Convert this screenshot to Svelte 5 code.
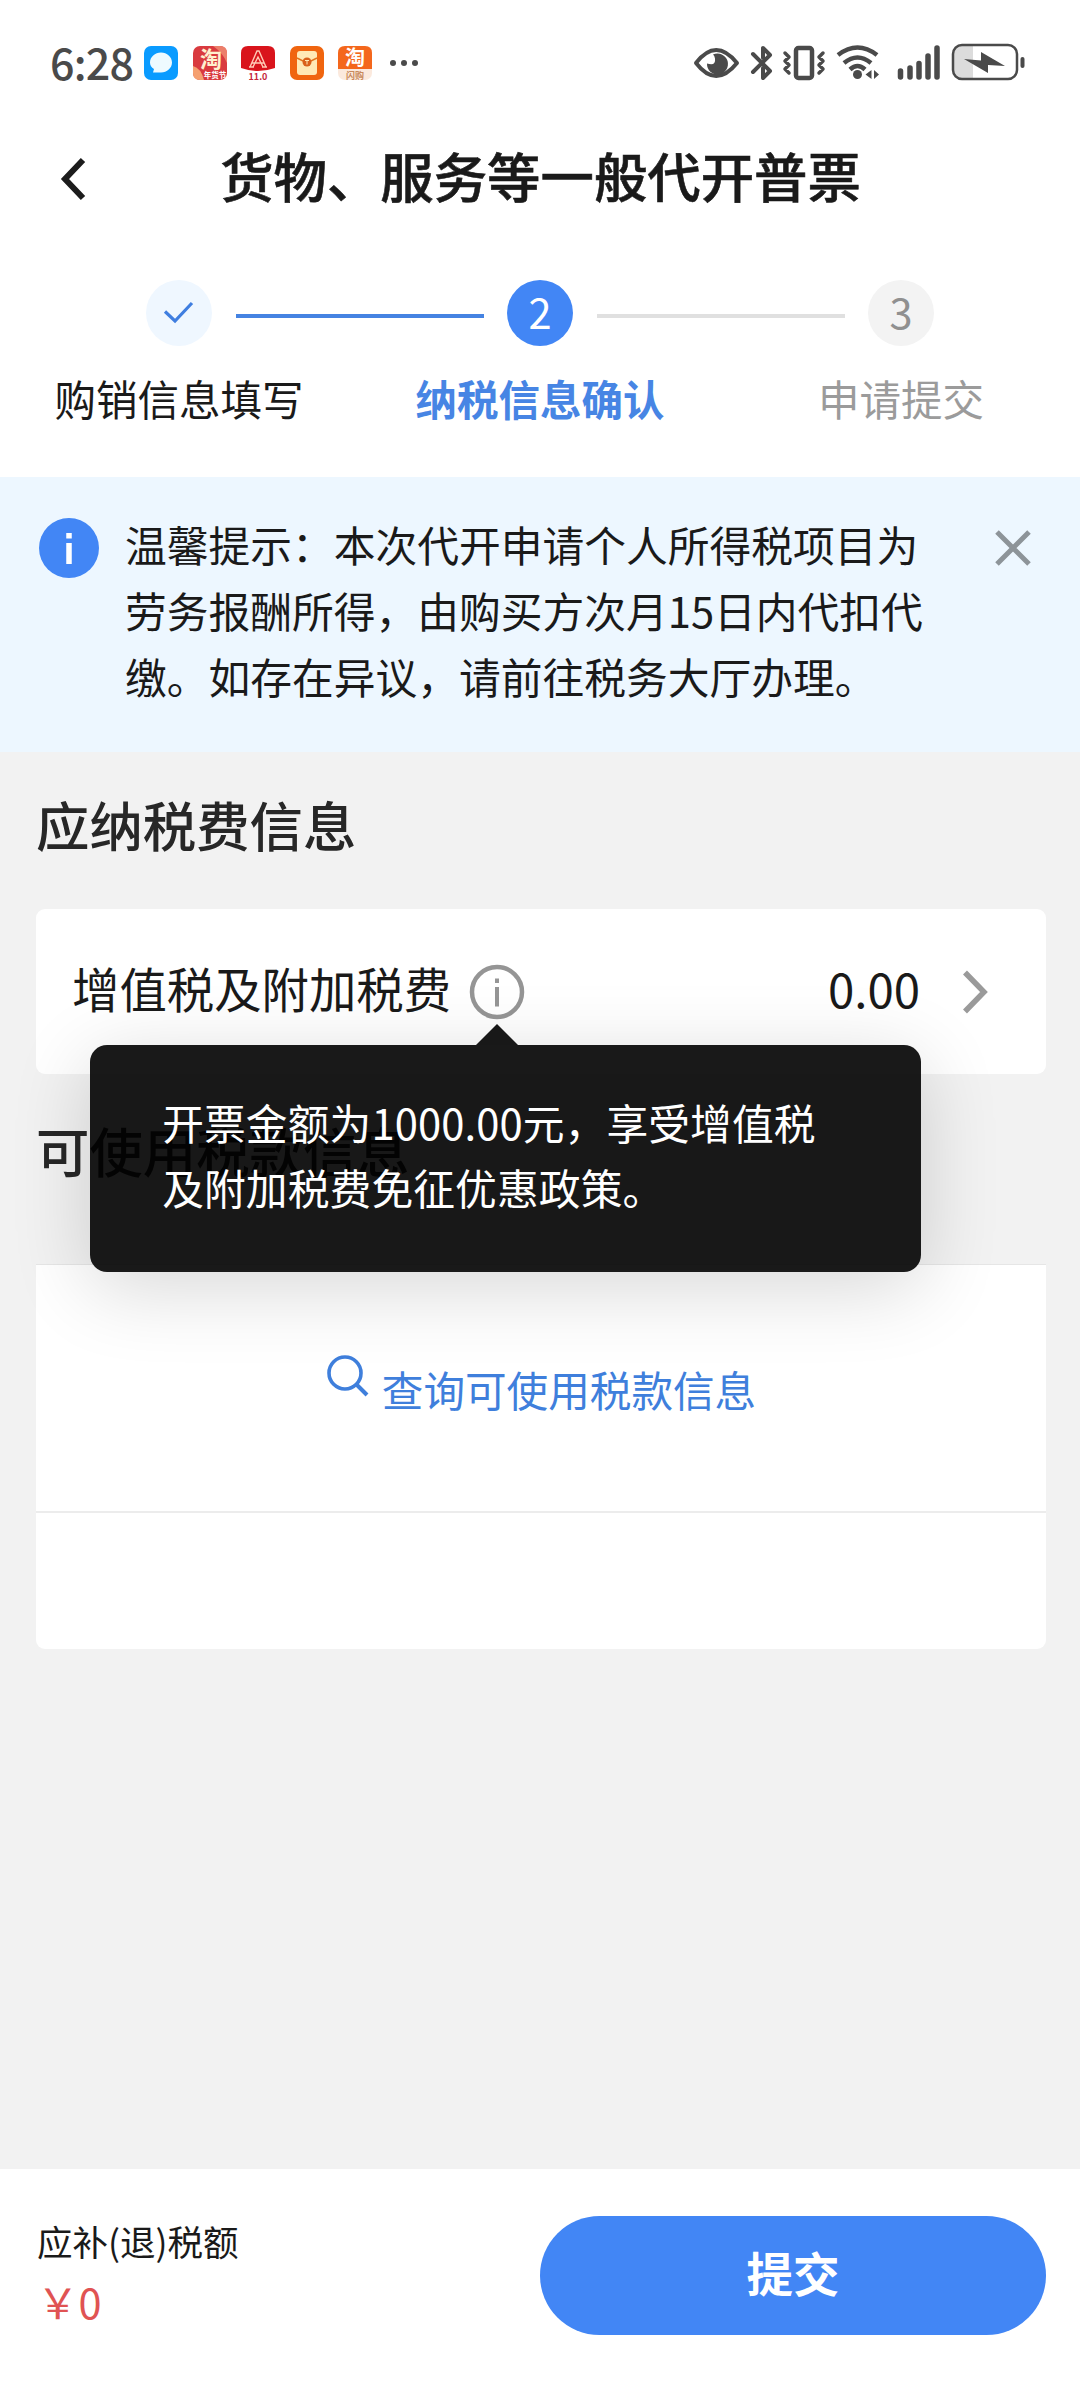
<script lang="ts">
    let steps = [
        { text: '购销信息填写', state: 'done' },
        { text: '纳税信息确认', state: 'active' },
        { text: '申请提交', state: 'wait' }
    ];

    let tip = ['温馨提示：本次代开申请个人所得税项目为', '劳务报酬所得，由购买方次月15日内代扣代', '缴。如存在异议，请前往税务大厅办理。'];
    let bubble = ['开票金额为1000.00元，享受增值税', '及附加税费免征优惠政策。'];
</script>

<div class="page">
    <div class="status">
        <span class="time">6:28</span>
        <div class="apps">
            <svg width="34" height="34" viewBox="0 0 34 34">
                <rect width="34" height="34" rx="7" fill="#0a9bff" />
                <path d="M17 6.500c6 0 11 4.500 11 10s-5 10-11 10l-8 0 1-3.500q-4-2.500-4-6.500c0-5.500 5-10 11-10z" fill="#eefaff" />
            </svg>
            <svg width="34" height="34" viewBox="0 0 34 34">
                <rect width="34" height="34" rx="7" fill="#d93a3f" />
                <path d="M0 20q8 2 11 14H7q-7 0-7-7z" fill="#f5a070" />
                <path d="M20 0h7q7 0 7 7v10q-4-10-14-17z" fill="#ec7f6a" />
                <text x="18" y="21" font-size="22" font-weight="700" fill="#fff0cf" text-anchor="middle">淘</text>
                <text x="22" y="32" font-size="7.500" font-weight="700" fill="#fff" text-anchor="middle">年货节</text>
            </svg>
            <svg width="34" height="34" viewBox="0 0 34 34">
                <path d="M0 22V7q0-7 7-7h20q7 0 7 7v15q-17 6-34 0z" fill="#d9141c" />
                <path d="M9 21 16 5h2l7 16M12 21l5-10 5 10M8 21h5M21 21h5M11 17h12" fill="none" stroke="#ffc9b5" stroke-width="1.400" />
                <text x="17" y="33.500" font-size="9" font-weight="700" fill="#c5263c" text-anchor="middle">11.0</text>
            </svg>
            <svg width="34" height="34" viewBox="0 0 34 34">
                <rect width="34" height="34" rx="7" fill="#f0650f" />
                <rect x="7" y="5" width="20" height="24" rx="3" fill="#ffe9b5" />
                <path d="M7 12l10 5 10-5" fill="none" stroke="#e2751e" stroke-width="1.500" />
                <circle cx="17" cy="16" r="4.500" fill="#d9601a" />
                <path d="M15 14.500h4M17 14.500v4" stroke="#ffe9b5" />
            </svg>
            <svg width="34" height="34" viewBox="0 0 34 34">
                <rect width="34" height="34" rx="7" fill="#fbe9dd" />
                <path d="M0 23V7q0-7 7-7h20q7 0 7 7v16z" fill="#f4671c" />
                <text x="17" y="19" font-size="20" font-weight="700" fill="#fff" text-anchor="middle">淘</text>
                <text x="17" y="32.500" font-size="9" font-weight="700" fill="#c98a5c" text-anchor="middle">闪购</text>
            </svg>
        </div>
        <svg class="more" width="30" height="8" viewBox="0 0 30 8" fill="#4a4a4a">
            <circle cx="4" cy="4" r="3" /><circle cx="15" cy="4" r="3" /><circle cx="26" cy="4" r="3" />
        </svg>
        <svg class="sys" width="340" height="42" viewBox="690 42 340 42" fill="none" stroke="#4a4a4a" stroke-width="4" stroke-linecap="round" stroke-linejoin="round">
            <path d="M696 63q20-26 41 0-21 26-41 0z" />
            <path d="M713 54.500a10.500 10.500 0 1 1-6 9q9 3 8-5-0.500-3-2-4z" fill="#4a4a4a" stroke="none" />
            <path d="M753 54l17 17-7 7V68M753 72l17-17-7-7v10" stroke-width="4" />
            <rect x="796" y="48" width="16" height="30" rx="2.500" stroke-width="4.500" />
            <path d="M785 53l4 4-4 4 4 4-4 4 4 4M823 53l-4 4 4 4-4 4 4 4-4 4" stroke-width="3.500" />
            <path d="M838 55q19.500-15 39 0M844 63q13.500-11 27 0M850 69.500q7.500-7 15 0" stroke-width="4.500" stroke-linecap="butt" />
            <circle cx="857.500" cy="74.500" r="4.500" fill="#4a4a4a" stroke="none" />
            <path d="M871.500 70v9l-6-4.500zM874 70v9l5-4.500z" fill="#4a4a4a" stroke="none" />
            <path d="M900.500 71v6M910 68v9M919 63.500v13.500M928 56v21M937 48v29" stroke-width="5.500" />
            <path d="M973 46v33h-13q-6 0-6-6V52q0-6 6-6z" fill="#dcdcdc" stroke="none" />
            <rect x="953" y="45" width="64" height="34" rx="9" stroke-width="2.500" />
            <path d="M964 59l17 1.500 0-8.500 24 14-17-1 0 8z" fill="#4a4a4a" stroke="none" />
            <path d="M1022.500 59v7" />
        </svg>
    </div>

    <header class="nav">
        <svg width="30" height="44" viewBox="0 0 30 44">
            <path d="M27 3 9 22l18 19" fill="none" stroke="#1c1c1c" stroke-width="6" />
        </svg>
        <h1>货物、服务等一般代开普票</h1>
    </header>

    <div class="steps">
        {#each steps as step, i}
            {#if i > 0}
                <i class="line" class:passed={i === 1}></i>
            {/if}
            <div class="step {step.state}">
                <span class="dot">
                    {#if step.state === 'done'}
                        <svg width="32" height="24" viewBox="0 0 32 24">
                            <path d="M2 10.500 12 20 29 2" fill="none" stroke="#3f7ee0" stroke-width="3.200" />
                        </svg>
                    {:else}
                        {i + 1}
                    {/if}
                </span>
                <span class="label">{step.text}</span>
            </div>
        {/each}
    </div>

    <section class="notice">
        <svg class="notice-icon" width="60" height="60" viewBox="0 0 60 60">
            <circle cx="30" cy="30" r="30" fill="#4286f5" />
            <path d="M30 15v5.500M30 25v21" stroke="#fff" stroke-width="5.500" />
        </svg>
        <p>
            {#each tip as row}
                <span>{row}</span>
            {/each}
        </p>
        <svg class="close" width="36" height="36" viewBox="0 0 36 36">
            <path d="M2 2l32 32M34 2 2 34" stroke="#8d9499" stroke-width="5" />
        </svg>
    </section>

    <main>
        <h2>应纳税费信息</h2>
        <div class="card tax">
            <span class="tax-name">增值税及附加税费</span>
            <div class="info">
                <svg width="56" height="56" viewBox="0 0 56 56">
                    <circle cx="28" cy="28" r="25" fill="none" stroke="#959595" stroke-width="4.500" />
                    <path d="M28 14.500v4.500M28 23v19.500" stroke="#959595" stroke-width="4" />
                </svg>
                <!-- Bublina s vysvětlením leží nad obsahem -->
                <div class="bubble">
                    {#each bubble as row}
                        <span>{row}</span>
                    {/each}
                </div>
            </div>
            <span class="amount">0.00</span>
            <svg width="28" height="44" viewBox="0 0 28 44">
                <path d="M3 2.500 22 22 3 41.500" fill="none" stroke="#9a9a9a" stroke-width="5.500" />
            </svg>
        </div>

        <h2 class="second">可使用税款信息</h2>
        <div class="card query">
            <a href="#query">
                <svg width="44" height="44" viewBox="0 0 44 44">
                    <path d="M31 31l10 10" stroke="#3f7fdc" stroke-width="4" />
                    <circle cx="19" cy="19" r="16" fill="none" stroke="#3f7fdc" stroke-width="3.600" />
                </svg>
                <span>查询可使用税款信息</span>
            </a>
        </div>
    </main>

    <footer>
        <div class="total">
            <span>应补(退)税额</span>
            <strong>￥0</strong>
        </div>
        <button>提交</button>
    </footer>
</div>

<style>
    :global(body) {
        margin: 0;
    }

    .page {
        display: flex;
        flex-direction: column;
        width: 1080px;
        height: 2382px;
        overflow: hidden;
        background: #f2f2f2;
        color: #1a1a1a;
        font-family: 'Noto Sans CJK SC', sans-serif;
    }

    .page * {
        box-sizing: border-box;
    }

    .status {
        display: flex;
        align-items: center;
        height: 126px;
        padding: 0 50px;
        background: #fff;
        color: #4a4a4a;
    }

    .time {
        width: 94px;
        padding-bottom: 5px;
        font-size: 43px;
        font-weight: 500;
        line-height: 60px;
        letter-spacing: -0.8px;
        white-space: nowrap;
    }

    .apps {
        display: flex;
        gap: 14.500px;
    }

    .apps svg {
        overflow: visible;
    }

    .more {
        margin-left: 17px;
    }

    .sys {
        margin-left: auto;
    }

    .nav {
        display: flex;
        align-items: center;
        height: 106px;
        padding: 0 54px;
        background: #fff;
    }

    .nav svg {
        flex: none;
        margin-left: 2px;
    }

    h1 {
        flex: 1;
        margin: 0 31px 0 0;
        padding-bottom: 8px;
        font-size: 53.400px;
        font-weight: 500;
        line-height: 80px;
        text-align: center;
        -webkit-text-stroke: 0.6px #1a1a1a;
    }

    .steps {
        display: flex;
        justify-content: center;
        height: 245px;
        padding-top: 48px;
        background: #fff;
    }

    .step {
        display: flex;
        flex-direction: column;
        align-items: center;
        width: 66px;
    }

    .dot {
        display: flex;
        align-items: center;
        justify-content: center;
        width: 66px;
        height: 66px;
        padding-bottom: 4px;
        border-radius: 50%;
        font-size: 41.500px;
    }

    .done .dot {
        padding-bottom: 0;
        background: #eff7ff;
    }

    .label {
        margin-top: 22px;
        font-size: 41.500px;
        line-height: 60px;
        white-space: nowrap;
    }

    .active .dot {
        background: #4286f5;
        color: #fff;
    }

    .active .label {
        color: #4785e4;
        font-weight: 700;
    }

    .wait .dot {
        background: #f3f3f3;
        color: #909090;
    }

    .wait .label {
        color: #9b9b9b;
    }

    .line {
        width: 248px;
        height: 4px;
        margin: 34px 23px 0 24px;
        background: #e0e0e0;
    }

    .line.passed {
        background: #4583e2;
    }

    .notice {
        display: flex;
        align-items: flex-start;
        height: 275px;
        padding: 35px 49px 0 39px;
        background: #edf7ff;
    }

    .notice-icon {
        margin-top: 6px;
    }

    .notice p {
        flex: 1;
        margin: 0 0 0 26px;
        font-size: 41.750px;
        line-height: 65.800px;
    }

    .notice p span,
    .bubble span {
        display: block;
        white-space: nowrap;
    }

    .close {
        margin-top: 18px;
    }

    main {
        flex: 1;
        padding: 0 34px 0 36px;
    }

    h2 {
        height: 157px;
        margin: 0;
        padding-top: 32px;
        color: #272727;
        font-size: 53.400px;
        font-weight: 500;
        line-height: 80px;
    }

    .second {
        height: 190px;
        padding-top: 36px;
    }

    .card {
        border-radius: 9px;
        background: #fff;
    }

    .tax {
        display: flex;
        align-items: center;
        height: 165px;
        padding: 0 56px 0 36px;
    }

    .tax-name,
    .amount {
        padding-bottom: 8px;
        font-size: 47.400px;
        line-height: 70px;
    }

    .info {
        position: relative;
        width: 56px;
        height: 56px;
        margin-left: 18px;
    }

    .bubble {
        position: absolute;
        z-index: 2;
        top: 81px;
        left: -379px;
        width: 831px;
        height: 227px;
        padding: 45px 72px;
        border-radius: 17px;
        background: rgba(0, 0, 0, 0.9);
        box-shadow: 0 16px 80px rgba(0, 0, 0, 0.16);
        color: #fff;
        font-size: 41.750px;
        line-height: 65.500px;
        letter-spacing: 0.1px;
    }

    .bubble::before {
        position: absolute;
        top: -21px;
        left: 386px;
        border: 21px solid transparent;
        border-top: 0;
        border-bottom-color: #181818;
        content: '';
    }

    .amount {
        margin-left: auto;
        margin-right: 42px;
    }

    .query {
        height: 385px;
        border-top: 1px solid #e6e6e6;
        border-top-left-radius: 0;
        border-top-right-radius: 0;
    }

    .query a {
        display: flex;
        justify-content: center;
        height: 248px;
        padding-top: 89px;
        border-bottom: 2px solid #ececec;
        color: #3f7fdc;
        font-size: 41.600px;
        line-height: 71px;
        text-decoration: none;
    }

    .query a span {
        margin-left: 12px;
    }

    footer {
        display: flex;
        align-items: center;
        justify-content: space-between;
        height: 213px;
        padding: 0 34px 0 37px;
        background: #fff;
    }

    .total {
        display: flex;
        flex-direction: column;
        padding-bottom: 10px;
        font-size: 35.500px;
        line-height: 61px;
    }

    .total strong {
        color: #e05353;
        font-size: 41.500px;
        font-weight: 400;
    }

    button {
        width: 506px;
        height: 119px;
        padding: 0 0 8px;
        border: 0;
        border-radius: 60px;
        background: #4286f5;
        color: #fff;
        font-family: inherit;
        font-size: 46.500px;
        font-weight: 700;
    }
</style>
